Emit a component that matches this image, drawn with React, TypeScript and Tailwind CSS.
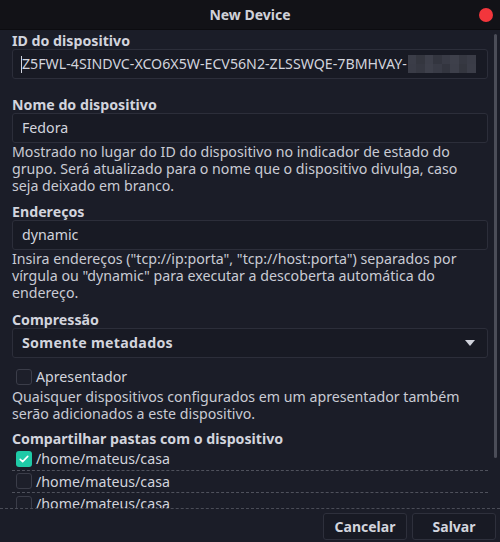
import React from "react";

const text = "text-[#d2d4dd]";

function Check({ checked }: { checked?: boolean }) {
	return checked ? (
		<span className="flex h-[16px] w-[16px] shrink-0 items-center justify-center rounded-[3px] bg-[#1fcaa7]">
			<svg viewBox="0 0 16 16" className="h-[12px] w-[12px]">
				<path d="M3 8.5l3.2 3L13 4.5" fill="none" stroke="#fff" strokeWidth="2.2" strokeLinecap="round" strokeLinejoin="round" />
			</svg>
		</span>
	) : (
		<span className="block h-[16px] w-[16px] shrink-0 rounded-[3px] border border-[#3b3d49] bg-[#1d1f2a]" />
	);
}

function Label({ children, className = "" }: { children: React.ReactNode; className?: string }) {
	return <div className={`h-[16px] text-[14.2px] leading-[16px] font-bold ${text} ${className}`}>{children}</div>;
}

function Help({ children }: { children: React.ReactNode }) {
	return <p className="max-w-[462px] text-[14.2px] leading-[17px] text-[#c9cbd4]">{children}</p>;
}

function Field({ children, className = "" }: { children: React.ReactNode; className?: string }) {
	return (
		<div className={`flex h-[30px] items-center overflow-hidden rounded-[3px] border border-[#2c2e3a] bg-[#181a24] px-[9px] text-[14.2px] ${text} ${className}`}>
			{children}
		</div>
	);
}

export default function App() {
	const blur = ["#3b3d48", "#34363f", "#3d3f4a", "#33353f", "#393b46", "#3e404b", "#363842", "#3a3c47"];
	return (
		<div className="flex h-[542px] w-[500px] flex-col overflow-hidden bg-[#1b1d28]" style={{ fontFamily: '"Noto Sans", "Open Sans", sans-serif' }}>
			{/* Title bar */}
			<div className="relative flex h-[30px] shrink-0 items-center justify-center border-b border-[#0c0c10] bg-[#121217]">
				<span className="text-[14px] font-bold text-[#d0d1d8]">New Device</span>
				<span className="absolute right-[7px] top-[8px] h-[14px] w-[14px] rounded-full bg-[#f2363c]" />
			</div>

			{/* Scrolled content */}
			<div className="relative h-[478px] shrink-0 overflow-hidden pl-[12px] pr-[12px] pt-[3px]">
				<div className="absolute right-[3px] top-[4px] h-[424px] w-[3px] rounded-full bg-[#4b4d58]" />

				<Label>ID do dispositivo</Label>
				<Field className="relative pl-[8px]">
					<span className="h-[17px] w-px shrink-0 bg-[#d2d4dd]" />
					<span className="whitespace-nowrap">Z5FWL-4SINDVC-XCO6X5W-ECV56N2-ZLSSWQE-7BMHVAY-</span>
					<span className="ml-[1px] grid shrink-0 grid-cols-8 grid-rows-2">
						{blur.concat([...blur].reverse()).map((c, i) => (
							<span key={i} className="h-[9px] w-[8.5px]" style={{ background: c }} />
						))}
					</span>
				</Field>

				<Label className="mt-[18px]">Nome do dispositivo</Label>
				<Field>Fedora</Field>
				<Help>
					Mostrado no lugar do ID do dispositivo no indicador de estado do grupo. Será atualizado para o nome que o dispositivo divulga, caso seja deixado em branco.
				</Help>

				<Label className="mt-[10px]">Endereços</Label>
				<Field>dynamic</Field>
				<Help>
					Insira endereços ("tcp://ip:porta", "tcp://host:porta") separados por vírgula ou "dynamic" para executar a descoberta automática do endereço.
				</Help>

				<Label className="mt-[11px]">Compressão</Label>
				<Field className="h-[28px] justify-between pr-[12px] font-bold tracking-[0.3px]">
					<span>Somente metadados</span>
					<svg viewBox="0 0 10 6" className="h-[6px] w-[10px]">
						<path d="M0 0h10L5 6z" fill="#d2d4dd" />
					</svg>
				</Field>

				<label className="mt-[10px] flex h-[18px] items-center gap-[4px] pl-[4px]">
					<Check />
					<span className={`text-[14.2px] ${text}`}>Apresentador</span>
				</label>
				<div className="mt-[2px]">
					<Help>Quaisquer dispositivos configurados em um apresentador também serão adicionados a este dispositivo.</Help>
				</div>

				<Label className="mt-[9px]">Compartilhar pastas com o dispositivo</Label>
				<div className="mt-[1px]">
					{[true, false, false].map((c, i) => (
						<div key={i} className="flex h-[22.5px] items-center gap-[4px] border-b border-dashed border-[#4f515c] pl-[4px]">
							<Check checked={c} />
							<span className={`text-[14.2px] ${text}`}>/home/mateus/casa</span>
						</div>
					))}
				</div>
			</div>

			{/* Footer */}
			<div className="flex flex-1 items-start justify-end gap-[5px] border-t border-dashed border-[#4a4c57] pr-[4px] pt-[4px]">
				<button className="h-[27px] w-[84px] rounded-[3px] border border-[#2e303c] bg-[#181a24] text-[14px] font-bold text-[#d2d4dd]">Cancelar</button>
				<button className="h-[27px] w-[84px] rounded-[3px] border border-[#2e303c] bg-[#181a24] text-[14px] font-bold text-[#d2d4dd]">Salvar</button>
			</div>
		</div>
	);
}
